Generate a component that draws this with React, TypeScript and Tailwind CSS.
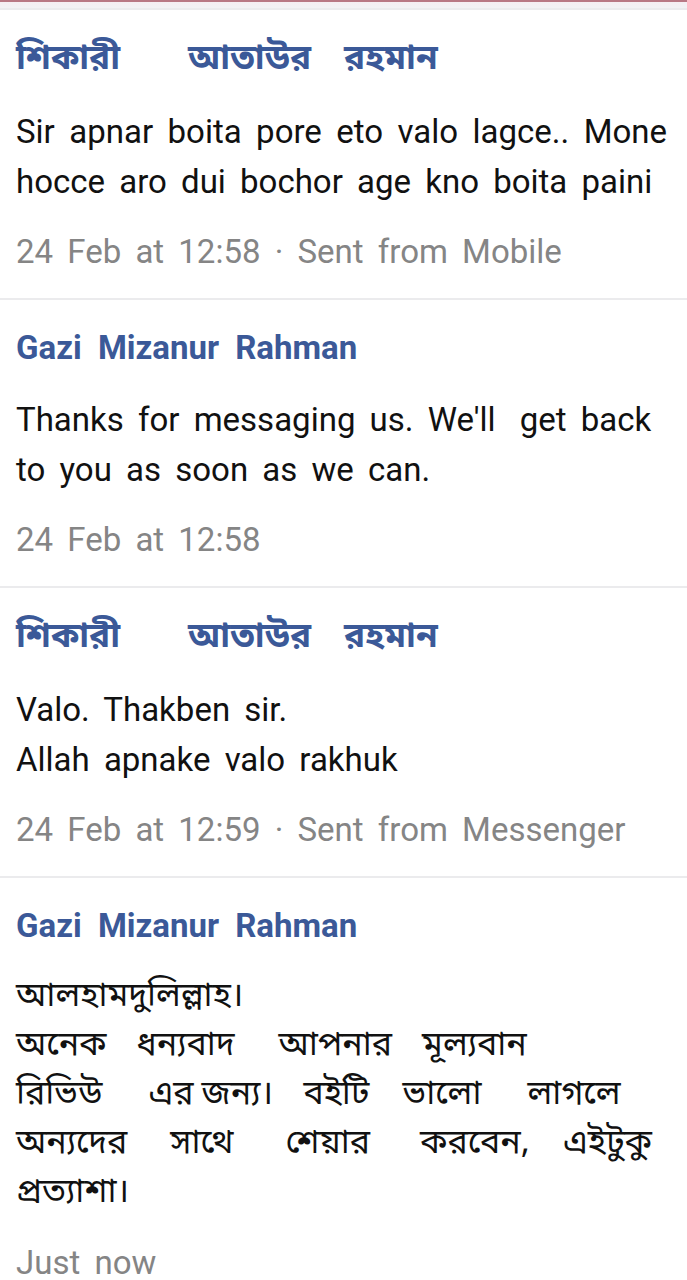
import React from "react";

const bn = { fontFamily: '"Noto Sans Bengali", "Lohit Bengali", "Noto Sans", Roboto, sans-serif' };

type Msg = {
  author: React.ReactNode;
  body: React.ReactNode;
  meta: string;
};

// word list with the left gap (px) before each word
const Line = ({ words }: { words: [string, number][] }) => (
  <div className="whitespace-nowrap">
    {words.map(([w, gap], i) => (
      <span key={i} style={{ marginLeft: gap }}>
        {w}
      </span>
    ))}
  </div>
);

const BanglaName = () => (
  <span style={bn} className="text-[35px]">
    <span className="mr-[68px]">শিকারী</span>
    <span className="mr-[33px]">আতাউর</span>
    <span>রহমান</span>
  </span>
);

const messages: Msg[] = [
  {
    author: <BanglaName />,
    body: (
      <>
        <div className="[text-align-last:justify]">Sir apnar boita pore eto valo lagce.. Mone</div>
        <div>hocce aro dui bochor age kno boita paini</div>
      </>
    ),
    meta: "24 Feb at 12:58 · Sent from Mobile",
  },
  {
    author: <span className="[word-spacing:8px]">Gazi Mizanur Rahman</span>,
    body: (
      <>
        <div>
          Thanks for messaging us. We'll{" "}
          <span className="ml-[10px]">get back</span>
        </div>
        <div>to you as soon as we can.</div>
      </>
    ),
    meta: "24 Feb at 12:58",
  },
  {
    author: <BanglaName />,
    body: (
      <>
        <div>Valo. Thakben sir.</div>
        <div>Allah apnake valo rakhuk</div>
      </>
    ),
    meta: "24 Feb at 12:59 · Sent from Messenger",
  },
  {
    author: <span className="[word-spacing:8px]">Gazi Mizanur Rahman</span>,
    body: (
      <div style={bn} className="text-[34px] leading-[49px] [word-spacing:0px]">
        <div>আলহামদুলিল্লাহ।</div>
        <Line words={[["অনেক", 0], ["ধন্যবাদ", 30], ["আপনার", 44], ["মূল্যবান", 30]]} />
        <Line words={[["রিভিউ", 0], ["এর", 46], ["জন্য।", 8], ["বইটি", 30], ["ভালো", 33], ["লাগলে", 46]]} />
        <Line words={[["অন্যদের", 0], ["সাথে", 43], ["শেয়ার", 52], ["করবেন,", 50], ["এইটুকু", 33]]} />
        <div>প্রত্যাশা।</div>
      </div>
    ),
    meta: "Just now",
  },
];

export default function App() {
  return (
    <div className="min-h-screen bg-white font-['Roboto',sans-serif] text-[33px] [word-spacing:6px]">
      <div className="h-[2px] bg-[#b87884]" />
      <div className="h-[6px] bg-gradient-to-b from-[#f5eef2] to-[#f2f2f4]" />
      {messages.map((m, i) => (
        <div key={i}>
          <div className="h-[2px] bg-[#ebebed]" />
          <div className="pl-4 pr-5 pt-[28px] pb-[21px]">
            <div className="font-bold leading-[40px] text-[#3b5998]">{m.author}</div>
            <div className="mt-[27px] leading-[50px] text-[#111]">{m.body}</div>
            <div className="mt-[20px] leading-[50px] text-[#858585]">{m.meta}</div>
          </div>
        </div>
      ))}
      <div className="h-[2px] bg-[#ebebed]" />
    </div>
  );
}
